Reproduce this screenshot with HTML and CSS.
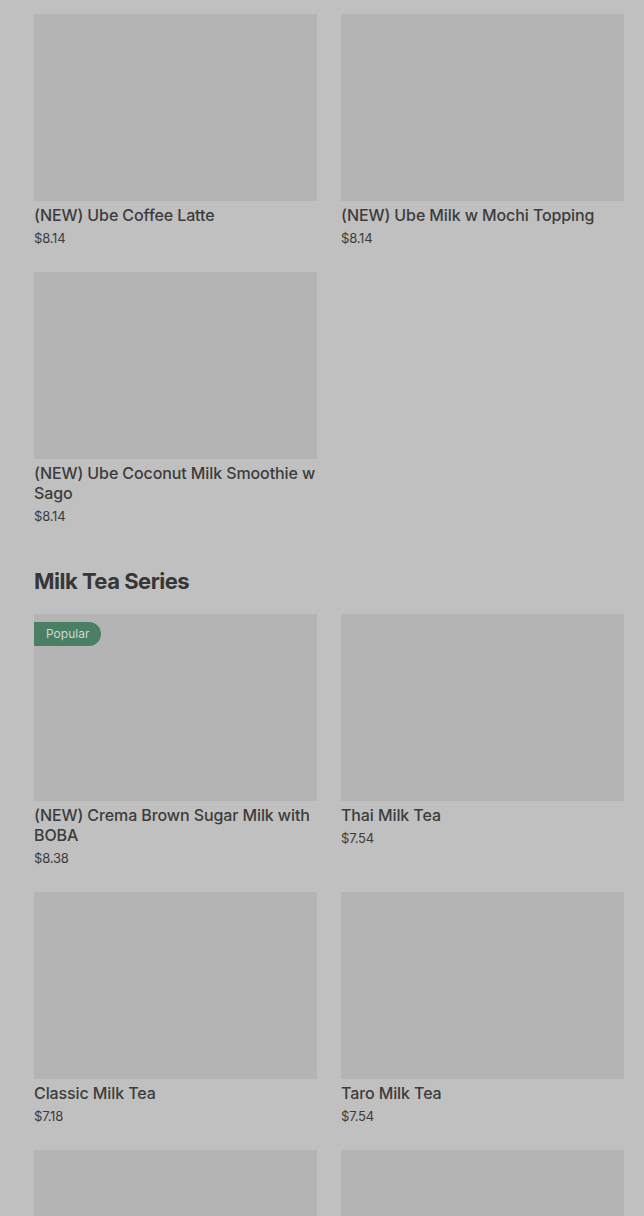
FILE: index.html
```html
<!DOCTYPE html>
<html lang="en">
<head>
	<meta charset="UTF-8">
	<meta name="viewport" content="width=device-width, initial-scale=1.0">
	<title>Menu</title>
	<link rel="stylesheet" href="styles.css">
</head>
<body>

	<div class="menu">
		<section class="category">
			<div class="grid">
				<div class="item">
					<div class="thumb"></div>
					<div class="name">(NEW) Ube Coffee Latte</div>
					<div class="price">$8.14</div>
				</div>
				<div class="item">
					<div class="thumb"></div>
					<div class="name">(NEW) Ube Milk w Mochi Topping</div>
					<div class="price">$8.14</div>
				</div>
				<div class="item">
					<div class="thumb"></div>
					<div class="name">(NEW) Ube Coconut Milk Smoothie w Sago</div>
					<div class="price">$8.14</div>
				</div>
			</div>
		</section>

		<section class="category">
			<h2>Milk Tea Series</h2>
			<div class="grid">
				<div class="item">
					<div class="thumb">
						<span class="badge">Popular</span>
					</div>
					<div class="name">(NEW) Crema Brown Sugar Milk with BOBA</div>
					<div class="price">$8.38</div>
				</div>
				<div class="item">
					<div class="thumb"></div>
					<div class="name">Thai Milk Tea</div>
					<div class="price">$7.54</div>
				</div>
				<div class="item">
					<div class="thumb"></div>
					<div class="name">Classic Milk Tea</div>
					<div class="price">$7.18</div>
				</div>
				<div class="item">
					<div class="thumb"></div>
					<div class="name">Taro Milk Tea</div>
					<div class="price">$7.54</div>
				</div>
				<div class="item">
					<div class="thumb"></div>
				</div>
				<div class="item">
					<div class="thumb"></div>
				</div>
			</div>
		</section>
	</div>

</body>
</html>
```

FILE: styles.css
```css
:root{
	font-family: Inter, "Liberation Sans", Arial, sans-serif;
}

body{
	margin: 0;
	background-color: #c0c0c0;
	color: #3c3c3c;
	overflow: hidden;
}

.menu{
	padding: 14px 20px 0 34px;
}

.category + .category{
	margin-top: 41px;
}

h2{
	margin: 0 0 18px 0;
	font-size: 22px;
	line-height: 30px;
	font-weight: 700;
	letter-spacing: -0.5px;
	color: #363636;
}

.grid{
	display: grid;
	grid-template-columns: 1fr 1fr;
	column-gap: 24px;
	row-gap: 25px;
	align-items: start;
}

.thumb{
	position: relative;
	height: 187px;
	background-color: #b4b4b4;
}

.badge{
	position: absolute;
	top: 8px;
	left: 0;
	padding: 0 12px;
	height: 24px;
	line-height: 24px;
	font-size: 12px;
	color: #cfd8d3;
	background-color: #4b7f63;
	border-radius: 0 12px 12px 0;
}

.name{
	margin-top: 4px;
	font-size: 16px;
	line-height: 20px;
	font-weight: 500;
	letter-spacing: -0.1px;
}

.price{
	margin-top: 4px;
	font-size: 13px;
	line-height: 18px;
	letter-spacing: -0.2px;
}
```
